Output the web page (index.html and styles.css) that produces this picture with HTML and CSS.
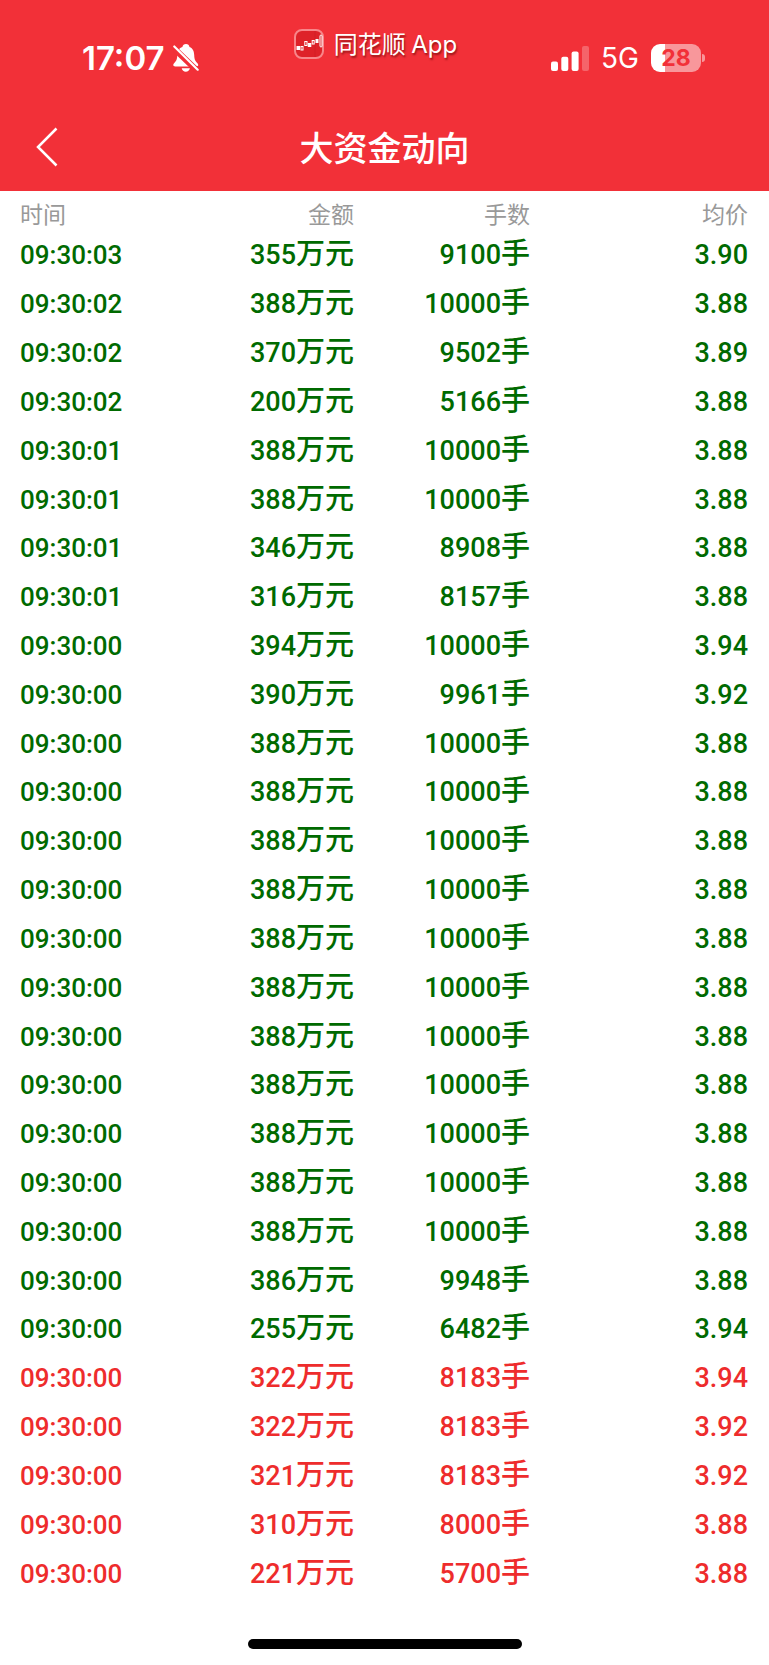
FILE: index.html
```html
<!DOCTYPE html>
<html lang="zh-CN">
<head>
<meta charset="utf-8">
<meta name="viewport" content="width=device-width, initial-scale=1">
<title>大资金动向</title>
<link rel="stylesheet" href="styles.css">
</head>
<body>
<header class="top">
  <div class="status">
    <div class="status-left">
      <span class="clock">17:07</span>
      <svg class="bell" width="26" height="28" viewBox="0 0 26 28" aria-hidden="true">
        <path fill="#fff" d="M13 0c-2 0-3.300 1.300-3.600 2.900C5.500 4.200 4.400 7.400 4.300 11c-.1 4.500-1.100 6-3 8-1.700 1.800-1.300 3.400 1 3.400h20.900c2.300 0 2.700-1.600 1-3.400-1.900-2-2.900-3.500-3-8-.1-3.600-1.200-6.800-4.700-8.100C16.200 1.300 15 0 13 0zM8.700 24.200h8.200c-.5 2.200-2 3.500-4.100 3.500s-3.600-1.300-4.100-3.500z"/>
        <path d="M-1 2.500L26 28.500" stroke="#f23038" stroke-width="6"/>
        <path d="M1.300 2.500L24.700 25.700" stroke="#fff" stroke-width="2.200" stroke-linecap="round"/>
      </svg>
    </div>
    <div class="brand">
      <svg width="30" height="30" viewBox="0 0 30 30" aria-hidden="true">
        <rect x="1" y="1" width="28" height="28" rx="7" fill="#de2229" stroke="#f8868a" stroke-width="2"/>
        <path d="M2 22L28 10M21 2v26" stroke="#c91d24" stroke-width="1" opacity=".5"/>
        <g stroke="#fff" stroke-width="1">
          <rect x="3" y="17.500" width="2.500" height="3" fill="#fff"/>
          <rect x="7" y="17.500" width="2" height="3.500" fill="#de2229"/>
          <rect x="10.800" y="12.500" width="2.200" height="4" fill="#de2229"/>
          <rect x="14.300" y="14.500" width="2.500" height="3" fill="#fff"/>
          <rect x="18.200" y="11.500" width="2" height="3.500" fill="#de2229"/>
          <rect x="22" y="10.500" width="2" height="3" fill="#fff"/>
          <rect x="26" y="6" width="2" height="12" rx="1" fill="#de2229"/>
        </g>
      </svg>
      <span class="brand-name">同花顺 <span class="brand-app">App</span></span>
    </div>
    <div class="status-right">
      <svg width="38" height="25" viewBox="0 0 38 25" fill="#fff" aria-hidden="true">
        <rect x="0" y="15.500" width="7" height="9.500" rx="2"/>
        <rect x="10.300" y="10.800" width="7" height="14.200" rx="2"/>
        <rect x="20.600" y="5.500" width="7" height="19.500" rx="2"/>
        <rect x="31" y="0" width="7" height="25" rx="2" opacity=".25"/>
      </svg>
      <span class="network">5G</span>
      <span class="power"><span class="battery">28</span><span class="nub"></span></span>
    </div>
  </div>
  <nav class="bar">
    <button class="back" type="button" aria-label="返回">
      <svg width="22" height="40" viewBox="0 0 22 40" aria-hidden="true">
        <path d="M20.500 1.500L2 20L20.500 38.500" fill="none" stroke="#fff" stroke-width="2.500"/>
      </svg>
    </button>
    <h1 class="title">大资金动向</h1>
  </nav>
</header>
<main class="content">
  <table class="trades">
    <thead>
      <tr class="row head"><th>时间</th><th>金额</th><th>手数</th><th>均价</th></tr>
    </thead>
    <tbody class="rows" id="rows"></tbody>
  </table>
</main>
<footer class="foot"><div class="home"></div></footer>
<script src="app.js"></script>
</body>
</html>
```

FILE: styles.css
```css
* {
  box-sizing: border-box;
}

body {
  margin: 0;
  min-height: 100vh;
  display: flex;
  flex-direction: column;
  background: #fff;
  font-family: Roboto, "Noto Sans CJK SC", sans-serif;
}

.top {
  background: #f23038;
  color: #fff;
}

.status {
  display: grid;
  grid-template-columns: 34% auto 1fr;
  align-items: start;
  height: 104px;
  padding: 29px 64px 0 82px;
}

.status-left,
.status-right {
  display: flex;
  align-items: center;
  height: 58px;
  font-family: Inter, "Liberation Sans", sans-serif;
}

.status-left {
  gap: 8px;
}

.status-right {
  justify-content: flex-end;
  gap: 12px;
}

.clock {
  font-size: 33px;
  font-weight: 600;
}

.network {
  font-size: 28px;
}

.brand {
  display: flex;
  align-items: center;
  gap: 10px;
  height: 30px;
}

.brand-name {
  font-size: 24px;
  line-height: 30px;
  font-family: "Noto Sans CJK SC", sans-serif;
  text-shadow: 1px 2px 2px rgba(90, 0, 0, 0.6);
}

.brand-app {
  font-family: Inter, sans-serif;
}

.power {
  display: flex;
  align-items: center;
  gap: 1px;
}

.battery {
  width: 50px;
  height: 28px;
  border-radius: 9px;
  background: linear-gradient(to right, #fff 28%, #f8979b 28%);
  color: #f23038;
  font-size: 23px;
  font-weight: 700;
  line-height: 28px;
  text-align: center;
}

.nub {
  width: 3px;
  height: 8px;
  border-radius: 0 4px 4px 0;
  background: #f8979b;
}

.bar {
  display: grid;
  grid-template-columns: 1fr auto 1fr;
  align-items: center;
  height: 87px;
  padding: 0 36px 2px;
}

.back {
  width: 22px;
  height: 40px;
  padding: 0;
  border: 0;
  background: none;
}

.back svg {
  display: block;
}

.title {
  margin: 0;
  font-family: "Noto Sans CJK SC", sans-serif;
  font-size: 34px;
  font-weight: 500;
  line-height: 40px;
}

.content {
  flex: 1;
  display: flex;
}

.trades {
  flex: 1;
  display: flex;
  flex-direction: column;
  padding: 0 21px 0 20px;
}

.rows {
  flex: 1;
  display: grid;
  grid-auto-rows: 1fr;
}

.row {
  display: grid;
  grid-template-columns: 158fr 176fr 176fr 218fr;
  align-items: baseline;
  align-content: center;
  color: #006a00;
  font-size: 27px;
  font-weight: 500;
  line-height: 44px;
  text-align: right;
}

.row th,
.row td {
  padding: 0;
}

.row th:first-child,
.row td:first-child {
  text-align: left;
}

.row td:first-child {
  font-size: 26px;
}

.head {
  height: 38px;
  padding-top: 6px;
  color: #999;
  font-size: 23px;
  line-height: 32px;
  font-family: "Noto Sans CJK SC", sans-serif;
}

.head th {
  font-weight: 400;
}

.row.up {
  color: #ee2c2c;
}

.unit {
  font-family: "Noto Sans CJK SC", sans-serif;
  font-size: 29px;
}

.foot {
  display: flex;
  justify-content: center;
  height: 69px;
  padding-top: 43px;
}

.home {
  width: 274px;
  height: 10px;
  border-radius: 5px;
  background: #000;
}
```

FILE: app.js
```javascript
const trades = [
  ["09:30:03", 355, 9100, "3.90"],
  ["09:30:02", 388, 10000, "3.88"],
  ["09:30:02", 370, 9502, "3.89"],
  ["09:30:02", 200, 5166, "3.88"],
  ["09:30:01", 388, 10000, "3.88"],
  ["09:30:01", 388, 10000, "3.88"],
  ["09:30:01", 346, 8908, "3.88"],
  ["09:30:01", 316, 8157, "3.88"],
  ["09:30:00", 394, 10000, "3.94"],
  ["09:30:00", 390, 9961, "3.92"],
  ...Array.from({ length: 11 }, () => ["09:30:00", 388, 10000, "3.88"]),
  ["09:30:00", 386, 9948, "3.88"],
  ["09:30:00", 255, 6482, "3.94"],
  ["09:30:00", 322, 8183, "3.94", "up"],
  ["09:30:00", 322, 8183, "3.92", "up"],
  ["09:30:00", 321, 8183, "3.92", "up"],
  ["09:30:00", 310, 8000, "3.88", "up"],
  ["09:30:00", 221, 5700, "3.88", "up"],
];

document.getElementById("rows").innerHTML = trades
  .map(([time, amount, lots, price, side = ""]) => `
    <tr class="row ${side}">
      <td>${time}</td>
      <td>${amount}<span class="unit">万元</span></td>
      <td>${lots}<span class="unit">手</span></td>
      <td>${price}</td>
    </tr>`)
  .join("");
```
